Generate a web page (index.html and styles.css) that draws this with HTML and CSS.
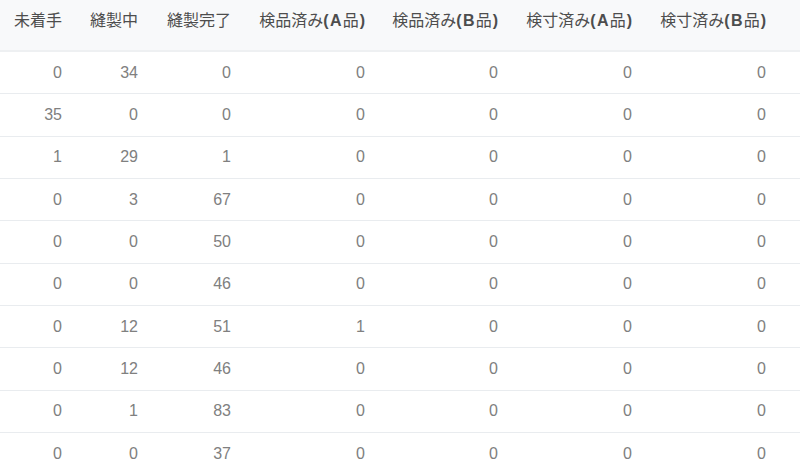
FILE: index.html
```html
<!DOCTYPE html>
<html lang="ja">
<head>
<meta charset="utf-8">
<link rel="stylesheet" href="styles.css">
</head>
<body>
<table class="grid">
  <colgroup>
    <col class="c1"><col class="c2"><col class="c3"><col class="c4"><col class="c5"><col class="c6"><col class="c7"><col class="c8">
  </colgroup>
  <thead>
    <tr>
      <th>未着手</th>
      <th>縫製中</th>
      <th>縫製完了</th>
      <th>検品済み<span class="en">(A</span>品<span class="close">)</span></th>
      <th>検品済み<span class="en">(B</span>品<span class="close">)</span></th>
      <th>検寸済み<span class="en">(A</span>品<span class="close">)</span></th>
      <th>検寸済み<span class="en">(B</span>品<span class="close">)</span></th>
      <th></th>
    </tr>
  </thead>
  <tbody>
    <tr><td>0</td><td>34</td><td>0</td><td>0</td><td>0</td><td>0</td><td>0</td><td></td></tr>
    <tr><td>35</td><td>0</td><td>0</td><td>0</td><td>0</td><td>0</td><td>0</td><td></td></tr>
    <tr><td>1</td><td>29</td><td>1</td><td>0</td><td>0</td><td>0</td><td>0</td><td></td></tr>
    <tr><td>0</td><td>3</td><td>67</td><td>0</td><td>0</td><td>0</td><td>0</td><td></td></tr>
    <tr><td>0</td><td>0</td><td>50</td><td>0</td><td>0</td><td>0</td><td>0</td><td></td></tr>
    <tr><td>0</td><td>0</td><td>46</td><td>0</td><td>0</td><td>0</td><td>0</td><td></td></tr>
    <tr><td>0</td><td>12</td><td>51</td><td>1</td><td>0</td><td>0</td><td>0</td><td></td></tr>
    <tr><td>0</td><td>12</td><td>46</td><td>0</td><td>0</td><td>0</td><td>0</td><td></td></tr>
    <tr><td>0</td><td>1</td><td>83</td><td>0</td><td>0</td><td>0</td><td>0</td><td></td></tr>
    <tr><td>0</td><td>0</td><td>37</td><td>0</td><td>0</td><td>0</td><td>0</td><td></td></tr>
  </tbody>
</table>
</body>
</html>
```
FILE: styles.css
```css
html, body {
  margin: 0;
  padding: 0;
  background: #ffffff;
}
body {
  font-family: "Liberation Sans", "Noto Sans CJK JP", sans-serif;
  font-size: 16px;
  overflow: hidden;
}
.grid {
  width: 800px;
  table-layout: fixed;
  border-collapse: separate;
  border-spacing: 0;
}
.c1 { width: 76px; }
.c2 { width: 76px; }
.c3 { width: 93px; }
.c4 { width: 134px; }
.c5 { width: 133px; }
.c6 { width: 134px; }
.c7 { width: 134px; }
.c8 { width: 20px; }
.grid th {
  background: #f8f9fa;
  color: #4d4d4d;
  font-weight: normal;
  text-align: right;
  white-space: nowrap;
  line-height: 24px;
  padding: 9px 14px 17px 0;
  border-bottom: 2px solid #eef0f2;
}
.grid th .en {
  font-weight: bold;
  letter-spacing: 1.2px;
}
.grid th .close {
  font-weight: bold;
  margin-left: 1px;
}
.grid td {
  color: #808080;
  text-align: right;
  padding: 0 14px 0 0;
  height: 41.33px;
  line-height: 24px;
  border-bottom: 1px solid #e9ecef;
  vertical-align: middle;
}
```
